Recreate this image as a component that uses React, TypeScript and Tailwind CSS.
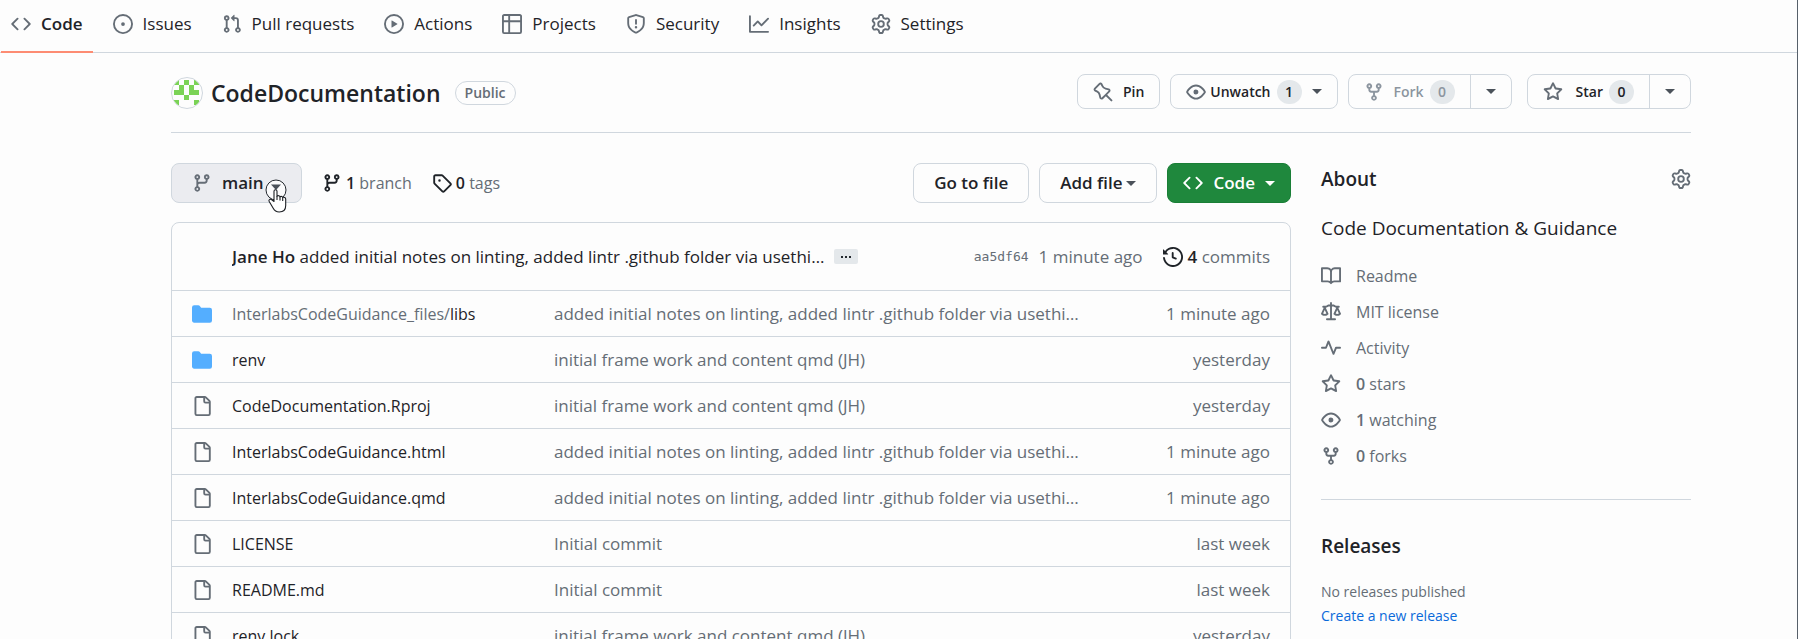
import React from "react";

const PATHS = {
  code: "m11.28 3.22 4.25 4.25a.75.75 0 0 1 0 1.06l-4.25 4.25a.749.749 0 0 1-1.275-.326.749.749 0 0 1 .215-.734L13.94 8l-3.72-3.72a.749.749 0 0 1 .326-1.275.749.749 0 0 1 .734.215Zm-6.56 0a.751.751 0 0 1 1.042.018.751.751 0 0 1 .018 1.042L2.06 8l3.72 3.72a.749.749 0 0 1-.326 1.275.749.749 0 0 1-.734-.215L.47 8.53a.75.75 0 0 1 0-1.06Z",
  issue: "M8 9.5a1.5 1.5 0 1 0 0-3 1.5 1.5 0 0 0 0 3ZM8 0a8 8 0 1 1 0 16A8 8 0 0 1 8 0ZM1.5 8a6.5 6.5 0 1 0 13 0 6.5 6.5 0 0 0-13 0Z",
  pull: "M1.5 3.25a2.25 2.25 0 1 1 3 2.122v5.256a2.251 2.251 0 1 1-1.5 0V5.372A2.25 2.25 0 0 1 1.5 3.25Zm5.677-.177L9.573.677A.25.25 0 0 1 10 .854V2.5h1A2.5 2.5 0 0 1 13.5 5v5.628a2.251 2.251 0 1 1-1.5 0V5a1 1 0 0 0-1-1h-1v1.646a.25.25 0 0 1-.427.177L7.177 3.427a.25.25 0 0 1 0-.354ZM3.75 2.5a.75.75 0 1 0 0 1.5.75.75 0 0 0 0-1.5Zm0 9.5a.75.75 0 1 0 0 1.5.75.75 0 0 0 0-1.5Zm8.25.75a.75.75 0 1 0 1.5 0 .75.75 0 0 0-1.5 0Z",
  play: "M8 0a8 8 0 1 1 0 16A8 8 0 0 1 8 0ZM1.5 8a6.5 6.5 0 1 0 13 0 6.5 6.5 0 0 0-13 0Zm4.879-2.773 4.264 2.559a.25.25 0 0 1 0 .428l-4.264 2.559A.25.25 0 0 1 6 10.559V5.442a.25.25 0 0 1 .379-.215Z",
  table: "M0 1.75C0 .784.784 0 1.75 0h12.5C15.216 0 16 .784 16 1.75v12.5A1.75 1.75 0 0 1 14.25 16H1.75A1.75 1.75 0 0 1 0 14.25ZM6.5 6.5v8h7.75a.25.25 0 0 0 .25-.25V6.5Zm8-1.5V1.75a.25.25 0 0 0-.25-.25H6.5V5Zm-13 1.5v7.75c0 .138.112.25.25.25H5v-8ZM5 5V1.5H1.75a.25.25 0 0 0-.25.25V5Z",
  shield: "M7.467.133a1.748 1.748 0 0 1 1.066 0l5.25 1.68A1.75 1.75 0 0 1 15 3.48V7c0 1.566-.32 3.182-1.303 4.682-.983 1.498-2.585 2.813-5.032 3.855a1.697 1.697 0 0 1-1.33 0c-2.447-1.042-4.049-2.357-5.032-3.855C1.32 10.182 1 8.566 1 7V3.48a1.75 1.75 0 0 1 1.217-1.667Zm.61 1.429a.25.25 0 0 0-.153 0l-5.25 1.68a.25.25 0 0 0-.174.238V7c0 1.358.275 2.666 1.057 3.86.784 1.194 2.121 2.34 4.366 3.297a.196.196 0 0 0 .154 0c2.245-.956 3.582-2.104 4.366-3.298C13.225 9.666 13.5 8.36 13.5 7V3.48a.251.251 0 0 0-.174-.237l-5.25-1.68ZM8.75 4.75v3a.75.75 0 0 1-1.5 0v-3a.75.75 0 0 1 1.5 0ZM9 10.5a1 1 0 1 1-2 0 1 1 0 0 1 2 0Z",
  graph: "M1.5 1.75V13.5h13.75a.75.75 0 0 1 0 1.5H.75a.75.75 0 0 1-.75-.75V1.75a.75.75 0 0 1 1.5 0Zm14.28 2.53-5.25 5.25a.75.75 0 0 1-1.06 0L7 7.06 4.28 9.78a.751.751 0 0 1-1.042-.018.751.751 0 0 1-.018-1.042l3.25-3.25a.75.75 0 0 1 1.06 0L10 7.94l4.72-4.72a.751.751 0 0 1 1.042.018.751.751 0 0 1 .018 1.042Z",
  gear: "M8 0a8.2 8.2 0 0 1 .701.031C9.444.095 9.99.645 10.16 1.29l.288 1.107c.018.066.079.158.212.224.231.114.454.243.668.386.123.082.233.09.299.071l1.103-.303c.644-.176 1.392.021 1.82.63.27.385.506.792.704 1.218.315.675.111 1.422-.364 1.891l-.814.806c-.049.048-.098.147-.088.294.016.257.016.515 0 .772-.01.147.038.246.088.294l.814.806c.475.469.679 1.216.364 1.891a7.977 7.977 0 0 1-.704 1.217c-.428.61-1.176.807-1.82.63l-1.102-.302c-.067-.019-.177-.011-.3.071a5.909 5.909 0 0 1-.668.386c-.133.066-.194.158-.211.224l-.29 1.106c-.168.646-.715 1.196-1.458 1.26a8.006 8.006 0 0 1-1.402 0c-.743-.064-1.289-.614-1.458-1.26l-.289-1.106c-.018-.066-.079-.158-.212-.224a5.738 5.738 0 0 1-.668-.386c-.123-.082-.233-.09-.299-.071l-1.103.303c-.644.176-1.392-.021-1.82-.63a8.12 8.12 0 0 1-.704-1.218c-.315-.675-.111-1.422.363-1.891l.815-.806c.05-.048.098-.147.088-.294a6.214 6.214 0 0 1 0-.772c.01-.147-.038-.246-.088-.294l-.815-.806C.635 6.045.431 5.298.746 4.623a7.92 7.92 0 0 1 .704-1.217c.428-.61 1.176-.807 1.82-.63l1.102.302c.067.019.177.011.3-.071.214-.143.437-.272.668-.386.133-.066.194-.158.211-.224l.29-1.106C6.009.645 6.556.095 7.299.03 7.53.01 7.764 0 8 0Zm-.571 1.525c-.036.003-.108.036-.137.146l-.289 1.105c-.147.561-.549.967-.998 1.189-.173.086-.34.183-.5.29-.417.278-.97.423-1.529.27l-1.103-.303c-.109-.03-.175.016-.195.045-.22.312-.412.644-.573.99-.014.031-.021.11.059.19l.815.806c.411.406.562.957.53 1.456a4.709 4.709 0 0 0 0 .582c.032.499-.119 1.05-.53 1.456l-.815.806c-.081.08-.073.159-.059.19.162.346.353.677.573.989.02.03.085.076.195.046l1.102-.303c.56-.153 1.113-.008 1.53.27.161.107.328.204.501.29.447.222.85.629.997 1.189l.289 1.105c.029.109.101.143.137.146a6.6 6.6 0 0 0 1.142 0c.036-.003.108-.036.137-.146l.289-1.105c.147-.561.549-.967.998-1.189.173-.086.34-.183.5-.29.417-.278.97-.423 1.529-.27l1.103.303c.109.029.175-.016.195-.045.22-.313.411-.644.573-.99.014-.031.021-.11-.059-.19l-.815-.806c-.411-.406-.562-.957-.53-1.456a4.709 4.709 0 0 0 0-.582c-.032-.499.119-1.05.53-1.456l.815-.806c.081-.08.073-.159.059-.19a6.464 6.464 0 0 0-.573-.989c-.02-.03-.085-.076-.195-.046l-1.102.303c-.56.153-1.113.008-1.53-.27a4.44 4.44 0 0 0-.501-.29c-.447-.222-.85-.629-.997-1.189l-.289-1.105c-.029-.11-.101-.143-.137-.146a6.6 6.6 0 0 0-1.142 0ZM11 8a3 3 0 1 1-6 0 3 3 0 0 1 6 0ZM9.5 8a1.5 1.5 0 1 0-3.001.001A1.5 1.5 0 0 0 9.5 8Z",
  pin: "m11.294.984 3.722 3.722a1.75 1.75 0 0 1-.504 2.826l-1.327.613a3.089 3.089 0 0 0-1.707 2.084l-.584 2.454c-.317 1.332-1.972 1.8-2.94.832L5.75 11.311 1.78 15.28a.749.749 0 1 1-1.06-1.06l3.969-3.97-2.204-2.204c-.968-.968-.5-2.623.832-2.94l2.454-.584a3.08 3.08 0 0 0 2.084-1.707l.613-1.327a1.75 1.75 0 0 1 2.826-.504ZM6.283 9.723l2.732 2.731a.25.25 0 0 0 .42-.119l.584-2.454a4.586 4.586 0 0 1 2.537-3.098l1.328-.613a.25.25 0 0 0 .072-.404l-3.722-3.722a.25.25 0 0 0-.404.072l-.613 1.328a4.584 4.584 0 0 1-3.098 2.537l-2.454.584a.25.25 0 0 0-.119.42l2.731 2.732Z",
  eye: "M8 2c1.981 0 3.671.992 4.933 2.078 1.27 1.091 2.187 2.345 2.637 3.023a1.62 1.62 0 0 1 0 1.798c-.45.678-1.367 1.932-2.637 3.023C11.67 13.008 9.981 14 8 14c-1.981 0-3.671-.992-4.933-2.078C1.797 10.83.88 9.576.43 8.898a1.62 1.62 0 0 1 0-1.798c.45-.677 1.367-1.931 2.637-3.022C4.33 2.992 6.019 2 8 2ZM1.679 7.932a.12.12 0 0 0 0 .136c.411.622 1.241 1.75 2.366 2.717C5.176 11.758 6.527 12.5 8 12.5c1.473 0 2.825-.742 3.955-1.715 1.124-.967 1.954-2.096 2.366-2.717a.12.12 0 0 0 0-.136c-.412-.621-1.242-1.75-2.366-2.717C10.824 4.242 9.473 3.5 8 3.5c-1.473 0-2.825.742-3.955 1.715-1.124.967-1.954 2.096-2.366 2.717ZM8 10a2 2 0 1 1-.001-3.999A2 2 0 0 1 8 10Z",
  fork: "M5 5.372v.878c0 .414.336.75.75.75h4.5a.75.75 0 0 0 .75-.75v-.878a2.25 2.25 0 1 1 1.5 0v.878a2.25 2.25 0 0 1-2.25 2.25h-1.5v2.128a2.251 2.251 0 1 1-1.5 0V8.5h-1.5A2.25 2.25 0 0 1 3.5 6.25v-.878a2.25 2.25 0 1 1 1.5 0ZM5 3.25a.75.75 0 1 0-1.5 0 .75.75 0 0 0 1.5 0Zm6.75.75a.75.75 0 1 0 0-1.5.75.75 0 0 0 0 1.5Zm-3 8.75a.75.75 0 1 0-1.5 0 .75.75 0 0 0 1.5 0Z",
  star: "M8 .25a.75.75 0 0 1 .673.418l1.882 3.815 4.21.612a.75.75 0 0 1 .416 1.279l-3.046 2.97.719 4.192a.751.751 0 0 1-1.088.791L8 12.347l-3.766 1.98a.75.75 0 0 1-1.088-.79l.72-4.194L.818 6.374a.75.75 0 0 1 .416-1.28l4.21-.611L7.327.668A.75.75 0 0 1 8 .25Zm0 2.445L6.615 5.5a.75.75 0 0 1-.564.41l-3.097.45 2.24 2.184a.75.75 0 0 1 .216.664l-.528 3.084 2.769-1.456a.75.75 0 0 1 .698 0l2.77 1.456-.53-3.084a.75.75 0 0 1 .216-.664l2.24-2.183-3.096-.45a.75.75 0 0 1-.564-.41L8 2.694Z",
  branch: "M9.5 3.25a2.25 2.25 0 1 1 3 2.122V6A2.5 2.5 0 0 1 10 8.5H6a1 1 0 0 0-1 1v1.128a2.251 2.251 0 1 1-1.5 0V5.372a2.25 2.25 0 1 1 1.5 0v1.836A2.493 2.493 0 0 1 6 7h4a1 1 0 0 0 1-1v-.628A2.25 2.25 0 0 1 9.5 3.25Zm-6 0a.75.75 0 1 0 1.5 0 .75.75 0 0 0-1.5 0Zm8.25-.75a.75.75 0 1 0 0 1.5.75.75 0 0 0 0-1.5ZM4.25 12a.75.75 0 1 0 0 1.5.75.75 0 0 0 0-1.5Z",
  tag: "M1 7.775V2.75C1 1.784 1.784 1 2.75 1h5.025c.464 0 .91.184 1.238.513l6.25 6.25a1.75 1.75 0 0 1 0 2.474l-5.026 5.026a1.75 1.75 0 0 1-2.474 0l-6.25-6.25A1.752 1.752 0 0 1 1 7.775Zm1.5 0c0 .066.026.13.073.177l6.25 6.25a.25.25 0 0 0 .354 0l5.025-5.025a.25.25 0 0 0 0-.354l-6.25-6.25a.25.25 0 0 0-.177-.073H2.75a.25.25 0 0 0-.25.25ZM6 5a1 1 0 1 1 0 2 1 1 0 0 1 0-2Z",
  history: "m.427 1.927 1.215 1.215a8.002 8.002 0 1 1-1.6 5.685.75.75 0 1 1 1.493-.154 6.5 6.5 0 1 0 1.18-4.458l1.358 1.358A.25.25 0 0 1 3.896 6H.25A.25.25 0 0 1 0 5.75V2.104a.25.25 0 0 1 .427-.177ZM7.75 4a.75.75 0 0 1 .75.75v2.992l2.028.812a.75.75 0 0 1-.557 1.392l-2.5-1A.751.751 0 0 1 7 8.25v-3.5A.75.75 0 0 1 7.75 4Z",
  folder: "M1.75 1A1.75 1.75 0 0 0 0 2.75v10.5C0 14.216.784 15 1.75 15h12.5A1.75 1.75 0 0 0 16 13.25v-8.5A1.75 1.75 0 0 0 14.25 3H7.5a.25.25 0 0 1-.2-.1l-.9-1.2C6.07 1.26 5.55 1 5 1H1.75Z",
  file: "M2 1.75C2 .784 2.784 0 3.75 0h6.586c.464 0 .909.184 1.237.513l2.914 2.914c.329.328.513.773.513 1.237v9.586A1.75 1.75 0 0 1 13.25 16h-9.5A1.75 1.75 0 0 1 2 14.25Zm1.75-.25a.25.25 0 0 0-.25.25v12.5c0 .138.112.25.25.25h9.5a.25.25 0 0 0 .25-.25V6h-2.75A1.75 1.75 0 0 1 9 4.25V1.5Zm6.75.062V4.25c0 .138.112.25.25.25h2.688l-.011-.013-2.914-2.914-.013-.011Z",
  book: "M0 1.75A.75.75 0 0 1 .75 1h4.253c1.227 0 2.317.59 3 1.501A3.743 3.743 0 0 1 11.006 1h4.245a.75.75 0 0 1 .75.75v10.5a.75.75 0 0 1-.75.75h-4.507a2.25 2.25 0 0 0-1.591.659l-.622.621a.75.75 0 0 1-1.06 0l-.622-.621A2.25 2.25 0 0 0 5.258 13H.75a.75.75 0 0 1-.75-.75Zm7.251 10.324.004-5.073-.002-2.253A2.25 2.25 0 0 0 5.003 2.5H1.5v9h3.757a3.75 3.75 0 0 1 1.994.574ZM8.755 4.75l-.004 7.322a3.752 3.752 0 0 1 1.992-.572H14.5v-9h-3.495a2.25 2.25 0 0 0-2.25 2.25Z",
  law: "M8.75.75V2h.985c.304 0 .603.08.867.231l1.29.736c.038.022.08.033.124.033h2.234a.75.75 0 0 1 0 1.5h-.427l2.111 4.692a.75.75 0 0 1-.154.838l-.53-.53.529.531-.001.002-.002.002-.006.006-.006.005-.01.01-.045.04c-.21.176-.441.327-.686.45C14.556 10.78 13.88 11 13 11a4.498 4.498 0 0 1-2.023-.454 3.544 3.544 0 0 1-.686-.45l-.045-.04-.016-.015-.006-.006-.004-.004v-.001a.75.75 0 0 1-.154-.838L12.178 4.5h-.162c-.305 0-.604-.079-.868-.231l-1.29-.736a.245.245 0 0 0-.124-.033H8.75V13h2.5a.75.75 0 0 1 0 1.5h-6.5a.75.75 0 0 1 0-1.5h2.5V3.5h-.984a.245.245 0 0 0-.124.033l-1.289.737c-.265.15-.564.23-.869.23h-.162l2.112 4.692a.75.75 0 0 1-.154.838l-.53-.53.529.531-.001.002-.002.002-.006.006-.016.015-.045.04c-.21.176-.441.327-.686.45C4.556 10.78 3.88 11 3 11a4.498 4.498 0 0 1-2.023-.454 3.544 3.544 0 0 1-.686-.45l-.045-.04-.016-.015-.006-.006-.004-.004v-.001a.75.75 0 0 1-.154-.838L2.178 4.5H1.75a.75.75 0 0 1 0-1.5h2.234a.249.249 0 0 0 .125-.033l1.288-.737c.265-.15.564-.23.869-.23h.984V.75a.75.75 0 0 1 1.5 0Zm2.945 8.477c.285.135.718.273 1.305.273s1.02-.138 1.305-.273L13 6.327Zm-10 0c.285.135.718.273 1.305.273s1.02-.138 1.305-.273L3 6.327Z",
  pulse: "M6 2c.306 0 .582.187.696.471L10 10.731l1.304-3.26A.751.751 0 0 1 12 7h3.25a.75.75 0 0 1 0 1.5h-2.742l-1.812 4.528a.751.751 0 0 1-1.392 0L6 4.77 4.696 8.03A.75.75 0 0 1 4 8.5H.75a.75.75 0 0 1 0-1.5h2.742l1.812-4.529A.751.751 0 0 1 6 2Z",
};

type IconName = keyof typeof PATHS;

function Icon({ name, className = "text-[#656d76]" }: { name: IconName; className?: string }) {
  return (
    <svg viewBox="0 0 16 16" aria-hidden="true" className={`size-5 shrink-0 fill-current ${className}`}>
      <path d={PATHS[name]} />
    </svg>
  );
}

function Caret({ className = "text-[#4b525a]" }: { className?: string }) {
  return (
    <svg viewBox="0 0 10 5" aria-hidden="true" className={`h-[5px] w-[10px] shrink-0 fill-current ${className}`}>
      <path d="M0 0h10L5 5z" />
    </svg>
  );
}

function Counter({ children }: { children: React.ReactNode }) {
  return (
    <span className="flex h-6 min-w-[25px] items-center justify-center rounded-full bg-[#e4e8eb] px-2 text-[14px]">
      {children}
    </span>
  );
}

const TABS: { icon: IconName; label: string; active?: boolean }[] = [
  { icon: "code", label: "Code", active: true },
  { icon: "issue", label: "Issues" },
  { icon: "pull", label: "Pull requests" },
  { icon: "play", label: "Actions" },
  { icon: "table", label: "Projects" },
  { icon: "shield", label: "Security" },
  { icon: "graph", label: "Insights" },
  { icon: "gear", label: "Settings" },
];

const LONG_MESSAGE = "added initial notes on linting, added lintr .github folder via usethi…";
const FRAMEWORK = "initial frame work and content qmd (JH)";

const FILES: { folder?: boolean; parent?: string; name: string; message: string; time: string }[] = [
  { folder: true, parent: "InterlabsCodeGuidance_files/", name: "libs", message: LONG_MESSAGE, time: "1 minute ago" },
  { folder: true, name: "renv", message: FRAMEWORK, time: "yesterday" },
  { name: "CodeDocumentation.Rproj", message: FRAMEWORK, time: "yesterday" },
  { name: "InterlabsCodeGuidance.html", message: LONG_MESSAGE, time: "1 minute ago" },
  { name: "InterlabsCodeGuidance.qmd", message: LONG_MESSAGE, time: "1 minute ago" },
  { name: "LICENSE", message: "Initial commit", time: "last week" },
  { name: "README.md", message: "Initial commit", time: "last week" },
  { name: "renv.lock", message: FRAMEWORK, time: "yesterday" },
];

const FACTS: { icon: IconName; count?: string; label: string }[] = [
  { icon: "book", label: "Readme" },
  { icon: "law", label: "MIT license" },
  { icon: "pulse", label: "Activity" },
  { icon: "star", count: "0", label: "stars" },
  { icon: "eye", count: "1", label: "watching" },
  { icon: "fork", count: "0", label: "forks" },
];

function Avatar() {
  return (
    <svg viewBox="0 0 32 32" role="img" aria-label="Owner avatar" className="size-8 shrink-0">
      <clipPath id="avatar-clip">
        <circle cx="16" cy="16" r="15" />
      </clipPath>
      <circle cx="16" cy="16" r="15.5" fill="#fdfdfd" stroke="#d0d7de" />
      <g clipPath="url(#avatar-clip)" fill="#7bd356">
        <path d="M3 3h5v5H3zM13 3h5v5h-5zM23 3h5v5h-5zM8 8h5v5H8zM18 8h5v5h-5zM3 13h10v5H3zM18 13h10v5H18zM13 18h5v5h-5zM3 23h5v5H3zM23 23h5v5h-5z" />
      </g>
    </svg>
  );
}

function HandCursor() {
  return (
    <svg viewBox="0 0 22 34" aria-hidden="true" className="pointer-events-none absolute top-[15px] right-[14px] h-[34px] w-[22px]">
      <circle cx="11" cy="11" r="10" fill="#fff" fillOpacity=".8" stroke="#24292f" />
      <path d="M6 5.5h10L11 11z" fill="#4b525a" />
      <path
        d="M9 22.5V12.2c0-2 3-2 3 0v5c1-1 2.8-.6 3 .6 1-.8 2.5-.4 2.7.8 1.4-.7 3-.1 3 1.4v6.5c0 4-2.5 6.5-6.5 6.5-3.200 0-4.700-1.200-6-3.800l-4-6.700c-1-2 1.200-3.100 2.600-1.700z"
        fill="#fff"
        stroke="#1c1f24"
        strokeWidth="1.1"
        strokeLinejoin="round"
      />
      <path d="M12 17v4M15 18v3.5M17.700 19v3" stroke="#1c1f24" strokeWidth="1.1" fill="none" />
    </svg>
  );
}

const SMALL_BUTTON = "flex h-[35px] items-center rounded-lg border border-[#d0d7de] text-[14px] font-semibold";
const LARGE_BUTTON = "flex h-10 items-center rounded-lg border border-[#d0d7de] text-[17px] font-semibold";

export default function App() {
  return (
    <div className="h-screen overflow-hidden border-r border-[#57606a] bg-[#fdfdfd] font-['Open_Sans',sans-serif] text-[17px] leading-6 text-[#1f2328]">
      <nav aria-label="Repository" className="flex h-[53px] items-start gap-[10px] border-b border-[#d0d7de] px-px">
        {TABS.map((tab) => (
          <a
            key={tab.label}
            href="#"
            aria-current={tab.active ? "page" : undefined}
            className={
              tab.active
                ? "flex h-[53px] items-center gap-[10px] border-b-2 border-[#fd8c73] px-[10px] pb-[3px] font-semibold"
                : "flex h-[53px] items-center gap-[10px] border-b-2 border-transparent px-[10px] pb-[3px]"
            }
          >
            <Icon name={tab.icon} />
            {tab.label}
          </a>
        ))}
      </nav>

      <div className="pr-[106px] pl-[171px]">
        <header className="flex h-20 items-start justify-between border-b border-[#d0d7de]">
          <div className="flex h-full items-center">
            <Avatar />
            <h1 className="ml-2 text-[23px] leading-8 font-semibold">CodeDocumentation</h1>
            <span className="ml-[14px] rounded-full border border-[#d0d7de] px-[9px] text-[14px] leading-[22px] font-semibold text-[#656d76]">
              Public
            </span>
          </div>
          <div className="mt-[21px] flex items-center">
            <button type="button" className={`${SMALL_BUTTON} gap-[10px] px-[15px]`}>
              <Icon name="pin" className="-scale-x-100 text-[#656d76]" />
              Pin
            </button>
            <button type="button" className={`${SMALL_BUTTON} ml-[10px] px-[15px]`}>
              <Icon name="eye" />
              <span className="mr-[6px] ml-1">Unwatch</span>
              <Counter>1</Counter>
              <span className="ml-[10px]">
                <Caret />
              </span>
            </button>
            <div className={`${SMALL_BUTTON} ml-[10px]`}>
              <button type="button" disabled className="flex h-full items-center px-[15px] text-[#8c959f]">
                <Icon name="fork" className="text-[#8c959f]" />
                <span className="mr-[6px] ml-[10px]">Fork</span>
                <Counter>0</Counter>
              </button>
              <button type="button" aria-label="More fork options" className="flex h-full items-center border-l border-[#d0d7de] px-[15px]">
                <Caret />
              </button>
            </div>
            <div className={`${SMALL_BUTTON} ml-[15px]`}>
              <button type="button" className="flex h-full items-center px-[15px]">
                <Icon name="star" />
                <span className="mr-[6px] ml-[13px]">Star</span>
                <Counter>0</Counter>
              </button>
              <button type="button" aria-label="More star options" className="flex h-full items-center border-l border-[#d0d7de] px-[15px]">
                <Caret />
              </button>
            </div>
          </div>
        </header>

        <div className="grid grid-cols-[minmax(0,1fr)_370px] gap-[30px] pt-[30px]">
          <main>
            <div className="flex items-center">
              <button type="button" className={`${LARGE_BUTTON} relative w-[131px] gap-[10px] bg-[#ebecf0] px-5`}>
                <Icon name="branch" />
                main
                <HandCursor />
              </button>
              <a href="#" className="ml-5 flex items-center gap-1 text-[16px] text-[#656d76]">
                <Icon name="branch" className="text-[#1f2328]" />
                <span>
                  <strong className="font-semibold text-[#1f2328]">1</strong> branch
                </span>
              </a>
              <a href="#" className="ml-5 flex items-center gap-1 text-[16px] text-[#656d76]">
                <Icon name="tag" className="text-[#1f2328]" />
                <span>
                  <strong className="font-semibold text-[#1f2328]">0</strong> tags
                </span>
              </a>
              <div className="ml-auto flex items-center gap-[10px]">
                <a href="#" className={`${LARGE_BUTTON} px-5`}>
                  Go to file
                </a>
                <button type="button" className={`${LARGE_BUTTON} gap-1 px-5`}>
                  Add file
                  <Caret />
                </button>
                <button type="button" className="flex h-10 items-center gap-[10px] rounded-lg border border-[#1a7f37] bg-[#1f883d] px-[15px] text-[17px] font-semibold text-white">
                  <Icon name="code" className="text-white" />
                  Code
                  <Caret className="text-white" />
                </button>
              </div>
            </div>

            <section className="mt-[19px] rounded-t-lg border border-[#d0d7de]">
              <div className="flex h-[67px] items-center pr-5 pl-[60px]">
                <p className="truncate text-[17px]">
                  <strong className="font-semibold">Jane Ho</strong> {LONG_MESSAGE}
                </p>
                <button type="button" aria-label="Show full commit message" className="ml-[10px] flex h-[15px] w-6 shrink-0 items-center justify-center rounded-xs bg-[#e4e8eb]">
                  <svg viewBox="0 0 12 4" aria-hidden="true" className="h-1 w-3 fill-[#24292f]">
                    <path d="M1 1h2v2H1zM5 1h2v2H5zM9 1h2v2H9z" />
                  </svg>
                </button>
                <div className="ml-auto flex shrink-0 items-center text-[#656d76]">
                  <a href="#" className="font-['DejaVu_Sans_Mono',monospace] text-[13px]">
                    aa5df64
                  </a>
                  <span className="ml-[10px]">1 minute ago</span>
                  <a href="#" className="ml-5 flex items-center gap-[5px]">
                    <Icon name="history" className="text-[#1f2328]" />
                    <span>
                      <strong className="font-semibold text-[#1f2328]">4</strong> commits
                    </span>
                  </a>
                </div>
              </div>
              <table className="w-full table-fixed border-collapse">
                <colgroup>
                  <col className="w-[60px]" />
                  <col className="w-[322px]" />
                  <col />
                  <col className="w-[150px]" />
                </colgroup>
                <tbody>
                  {FILES.map((file) => (
                    <tr key={file.name} className="h-[46px] border-t border-[#d0d7de]">
                      <td className="pl-5">
                        <Icon
                          name={file.folder ? "folder" : "file"}
                          className={file.folder ? "text-[#54aeff]" : "text-[#656d76]"}
                        />
                      </td>
                      <td className="truncate text-[16px]">
                        <a href="#">
                          <span className="text-[#656d76]">{file.parent}</span>
                          {file.name}
                        </a>
                      </td>
                      <td className="truncate text-[#656d76]">{file.message}</td>
                      <td className="pr-5 text-right text-[#656d76]">{file.time}</td>
                    </tr>
                  ))}
                </tbody>
              </table>
            </section>
          </main>

          <aside>
            <div className="flex h-8 items-center justify-between">
              <h2 className="text-[19px] font-semibold">About</h2>
              <button type="button" aria-label="Edit repository metadata">
                <Icon name="gear" />
              </button>
            </div>
            <p className="mt-[18px] text-[19px] leading-[30px]">Code Documentation &amp; Guidance</p>
            <ul className="mt-[15px] flex flex-col">
              {FACTS.map((fact) => (
                <li key={fact.label}>
                  <a href="#" className="flex h-9 items-center gap-[15px] text-[16px] text-[#656d76]">
                    <Icon name={fact.icon} />
                    <span>
                      {fact.count && <strong className="font-semibold">{fact.count} </strong>}
                      {fact.label}
                    </span>
                  </a>
                </li>
              ))}
            </ul>
            <section className="mt-[25px] border-t border-[#d0d7de] pt-[30px]">
              <h2 className="text-[19px] leading-8 font-semibold">Releases</h2>
              <p className="mt-[18px] text-[14px] text-[#656d76]">No releases published</p>
              <a href="#" className="block text-[14px] text-[#0969da]">
                Create a new release
              </a>
            </section>
          </aside>
        </div>
      </div>
    </div>
  );
}
